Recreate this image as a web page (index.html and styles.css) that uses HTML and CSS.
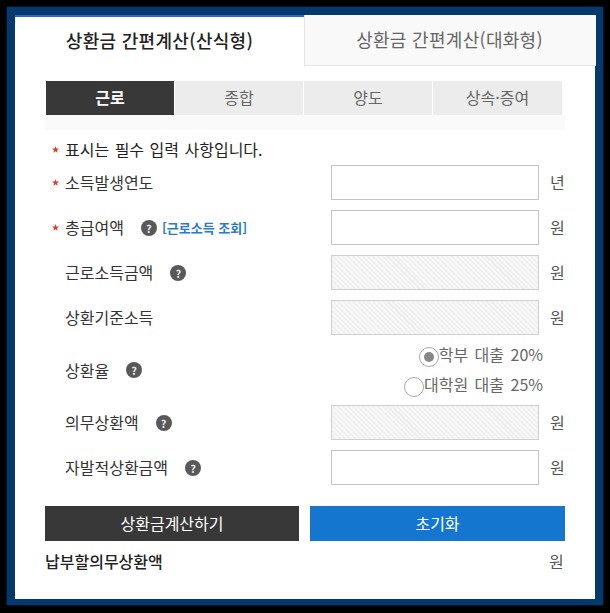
FILE: index.html
```html
<!DOCTYPE html>
<html lang="ko">
<head>
    <meta charset="UTF-8">
    <title>상환금 간편계산</title>
    <link rel="stylesheet" href="styles.css">
</head>
<body>
    <div class="frame">
        <div class="panel">
            <div class="top-tabs">
                <div class="top-tab active">상환금 간편계산(산식형)</div>
                <div class="top-tab">상환금 간편계산(대화형)</div>
            </div>

            <div class="content">
                <div class="sub-tabs">
                    <div class="sub-tab active">근로</div>
                    <div class="sub-tab">종합</div>
                    <div class="sub-tab">양도</div>
                    <div class="sub-tab">상속·증여</div>
                </div>

                <div class="notice">
                    <svg class="star" viewBox="0 0 10 10"><polygon points="5,0 6.3,3.4 10,3.6 7.1,5.9 8.1,9.6 5,7.5 1.9,9.6 2.9,5.9 0,3.6 3.7,3.4"/></svg>
                    <span>표시는 필수 입력 사항입니다.</span>
                </div>

                <div class="row">
                    <svg class="star" viewBox="0 0 10 10"><polygon points="5,0 6.3,3.4 10,3.6 7.1,5.9 8.1,9.6 5,7.5 1.9,9.6 2.9,5.9 0,3.6 3.7,3.4"/></svg>
                    <label class="label">소득발생연도</label>
                    <input class="field" type="text">
                    <span class="unit">년</span>
                </div>
                <div class="row">
                    <svg class="star" viewBox="0 0 10 10"><polygon points="5,0 6.3,3.4 10,3.6 7.1,5.9 8.1,9.6 5,7.5 1.9,9.6 2.9,5.9 0,3.6 3.7,3.4"/></svg>
                    <label class="label">총급여액<span class="help">?</span><a class="lookup">[근로소득 조회]</a></label>
                    <input class="field" type="text">
                    <span class="unit">원</span>
                </div>
                <div class="row">
                    <span></span>
                    <label class="label">근로소득금액<span class="help">?</span></label>
                    <input class="field locked" type="text" disabled>
                    <span class="unit">원</span>
                </div>
                <div class="row">
                    <span></span>
                    <label class="label">상환기준소득</label>
                    <input class="field locked" type="text" disabled>
                    <span class="unit">원</span>
                </div>
                <div class="row rate-row">
                    <span></span>
                    <label class="label">상환율<span class="help">?</span></label>
                    <div class="rates">
                        <div class="rate"><span class="radio checked"></span>학부 대출 20%</div>
                        <div class="rate"><span class="radio"></span>대학원 대출 25%</div>
                    </div>
                </div>
                <div class="row">
                    <span></span>
                    <label class="label">의무상환액<span class="help">?</span></label>
                    <input class="field locked" type="text" disabled>
                    <span class="unit">원</span>
                </div>
                <div class="row">
                    <span></span>
                    <label class="label">자발적상환금액<span class="help">?</span></label>
                    <input class="field" type="text">
                    <span class="unit">원</span>
                </div>

                <div class="buttons">
                    <button class="btn btn-dark">상환금계산하기</button>
                    <button class="btn btn-blue">초기화</button>
                </div>

                <div class="result">
                    <strong>납부할의무상환액</strong>
                    <span class="unit">원</span>
                </div>
            </div>
        </div>
    </div>
</body>
</html>
```

FILE: styles.css
```css
* {
    margin: 0;
    padding: 0;
    box-sizing: border-box;
}

html, body {
    height: 613px;
    overflow: hidden;
}

body {
    background-color: #000;
    padding: 7px;
    font-family: "Noto Sans CJK KR", "Noto Sans", sans-serif;
    font-size: 16px;
    color: #333;
}

.frame {
    width: 596px;
    height: 598px;
    padding: 8px 8px 6px;
    background-color: #03396c;
    box-shadow: 0 0 2px #03396c;
}

.panel {
    width: 580px;
    height: 584px;
    background-color: #fff;
}

.top-tabs {
    display: grid;
    grid-template-columns: 289px 292px;
    height: 51px;
    width: 581px;
}

.top-tab {
    display: flex;
    align-items: center;
    justify-content: center;
    padding-right: 2px;
    padding-bottom: 2px;
    font-size: 18px;
    letter-spacing: 0.3px;
    color: #666;
    background-color: #f9f9f9;
    border-bottom: 1px solid #e5e5e5;
    border-left: 1px solid #e5e5e5;
}

.top-tab.active {
    padding-right: 0;
    padding-bottom: 4px;
    color: #222;
    font-weight: 500;
    background-color: #fff;
    border-top: 2px solid #2a6db5;
    border-bottom: none;
    border-left: none;
}

.content {
    padding: 15px 30px 0;
}

.sub-tabs {
    display: grid;
    grid-template-columns: 128px 128px 128px 129px;
    gap: 1px;
    padding: 0 0 15px 1px;
    background: linear-gradient(#fff 34px, #fafafa 34px);
}

.sub-tab {
    height: 34px;
    line-height: 32px;
    text-align: center;
    color: #666;
    background-color: #ececec;
}

.sub-tab.active {
    color: #fff;
    font-weight: 700;
    background-color: #383838;
}

.notice {
    display: flex;
    align-items: center;
    height: 30px;
    margin-top: 4px;
    margin-bottom: 1px;
    padding-left: 7px;
    word-spacing: 1px;
    color: #222;
}

.notice .star {
    margin-right: 6px;
}

.star {
    width: 7px;
    height: 7px;
    fill: #d9402b;
}

.row {
    display: grid;
    grid-template-columns: 13px 1fr 208px 26px;
    align-items: center;
    height: 35px;
    margin-bottom: 10px;
    padding-left: 7px;
}

.label {
    display: flex;
    align-items: center;
    padding-bottom: 1px;
}

.help {
    display: inline-block;
    width: 16px;
    height: 16px;
    margin-top: 1px;
    margin-left: 17px;
    border-radius: 50%;
    line-height: 16px;
    text-align: center;
    font-size: 11px;
    font-weight: 700;
    color: #e8e8e8;
    background-color: #58595b;
}

.lookup {
    margin-left: 5px;
    font-size: 13px;
    font-weight: 700;
    color: #2a7ac7;
}

.field {
    width: 208px;
    height: 35px;
    border: 1px solid #c4c4c4;
    background-color: #fff;
}

.field.locked {
    border-color: #d0d0d0;
    background: repeating-linear-gradient(45deg, #f6f6f6, #f6f6f6 2px, #f0f0f0 2px, #f0f0f0 3.5px);
}

.unit {
    justify-self: end;
    width: 15px;
    line-height: 33px;
    color: #555;
}

.rate-row {
    height: 50px;
    grid-template-columns: 13px 1fr auto;
}

.rates {
    margin: -5px 22px -5px 0;
}

.rate {
    display: flex;
    align-items: center;
    justify-content: flex-end;
    height: 30px;
    padding-bottom: 2px;
    word-spacing: 2px;
    color: #666;
}

.radio {
    position: relative;
    width: 20px;
    height: 20px;
    margin-top: 5px;
    border: 1px solid #a8a8a8;
    border-radius: 50%;
    background-color: #fff;
}

.radio.checked::after {
    content: "";
    position: absolute;
    top: 4px;
    left: 4px;
    width: 10px;
    height: 10px;
    border-radius: 50%;
    background-color: #888;
}

.buttons {
    display: grid;
    grid-template-columns: 254px 1fr;
    gap: 11px;
    margin-top: 21px;
}

.btn {
    height: 35px;
    border: none;
    padding-bottom: 2px;
    font-family: inherit;
    font-size: 16px;
    color: #fff;
}

.btn-dark {
    background-color: #383838;
}

.btn-blue {
    background-color: #1476cf;
}

.result {
    display: flex;
    align-items: center;
    justify-content: space-between;
    height: 30px;
    margin-top: 6px;
    padding-right: 1px;
    padding-bottom: 2px;
    color: #222;
}

.result strong {
    font-weight: 500;
}
```
